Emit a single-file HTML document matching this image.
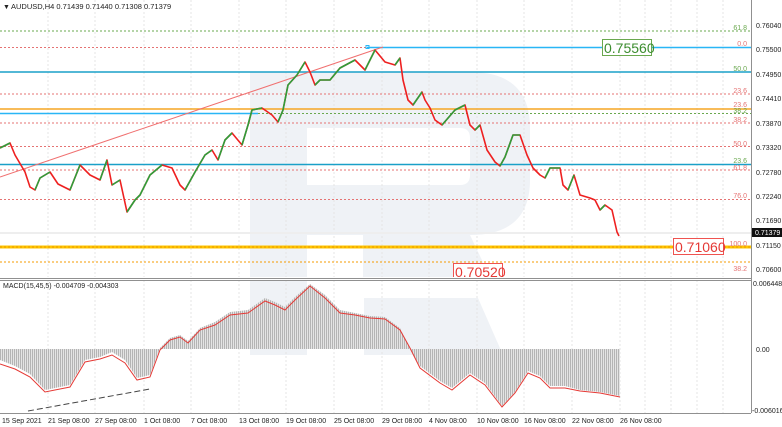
<!DOCTYPE html>
<html><head><meta charset="utf-8"><style>
html,body{margin:0;padding:0;background:#fff;}
svg{display:block;font-family:"Liberation Sans",sans-serif;}
</style></head><body>
<svg width="782" height="427" viewBox="0 0 782 427" xmlns="http://www.w3.org/2000/svg">
<defs>
<pattern id="hp" width="2" height="4" patternUnits="userSpaceOnUse"><rect width="1" height="4" fill="#b4b4b4"/><rect x="1" width="1" height="4" fill="#e4e4e4"/></pattern>
</defs>
<rect width="782" height="427" fill="#fff"/>
<path d="M250 72 H470 Q530 72 530 128 V180 Q530 235 470 235 H307 V277 H250 Z M307 128 V185 H460 Q470 185 470 175 V138 Q470 128 460 128 Z" fill="#eff2f6" fill-rule="evenodd"/>
<path d="M363 235 H470 L490 277 H363 Z" fill="#eff2f6"/>
<rect x="250" y="281" width="57" height="74" fill="#eff2f6"/>
<path d="M364 298 H478 L503 355 H364 Z" fill="#eff2f6"/>
<g stroke="#e4e4e4" stroke-dasharray="2,2" stroke-width="1">
<path d="M48 0V413M95 0V413M144 0V413M191 0V413M239 0V413M286 0V413M334 0V413M382 0V413M429 0V413M477 0V413M524 0V413M572 0V413M620 0V413M645 0V413M671 0V413M697 0V413M723 0V413"/>
</g>
<g stroke-width="1" fill="none">
<path d="M0 31H751" stroke="#6aa84f" stroke-dasharray="2,2"/>
<path d="M0 47.5H751" stroke="#e57373" stroke-dasharray="2,2"/>
<path d="M367 47.5H751" stroke="#29b6f6" stroke-width="1.5"/>
<rect x="366" y="45.5" width="3" height="3" stroke="#29b6f6"/>
<path d="M0 72H751" stroke="#1aa0c8" stroke-width="1.6"/>
<path d="M0 94H751" stroke="#e57373" stroke-dasharray="2,2"/>
<path d="M0 109H751" stroke="#f5a623" stroke-width="1.6"/>
<path d="M0 113.5H258" stroke="#29b6f6" stroke-width="1.6"/>
<path d="M258 113.5H751" stroke="#6aa84f" stroke-dasharray="2,2"/>
<path d="M0 123H751" stroke="#e57373" stroke-dasharray="2,2"/>
<path d="M0 146.5H751" stroke="#e57373" stroke-dasharray="2,2"/>
<path d="M0 164.5H751" stroke="#1aa0c8" stroke-width="1.6"/>
<path d="M0 170H751" stroke="#e57373" stroke-dasharray="2,2"/>
<path d="M0 199.5H751" stroke="#e57373" stroke-dasharray="2,2"/>
<path d="M0 233H751" stroke="#eeeeee" stroke-width="2"/>
<path d="M0 247H751" stroke="#ffc400" stroke-width="3"/>
<path d="M0 247H751" stroke="#e08a00" stroke-width="0.8" stroke-dasharray="2,2"/>
<path d="M0 262H751" stroke="#f59b00" stroke-dasharray="2,2"/>
<path d="M0 177L383 47" stroke="#f07070"/>
</g>
<g fill="none" stroke-width="1.6" stroke-linejoin="round">
<polyline stroke="#ee2020" points="0,148 10,143 15,155 25,172 30,187 35,190 40,178 50,172 58,184 70,190 80,165 90,175 100,180 107,160 112,185 120,180 127,212 135,200 140,195 150,175 162,165 172,168 180,185 185,190 195,172 205,155 212,150 218,160 225,140 232,133 242,145 248,125 252,110 262,108 272,115 278,122 283,110 288,85 297,75 305,62 310,72 315,85 320,80 330,80 340,68 355,60 365,70 375,50 385,62 395,65 400,58 403,80 408,100 413,105 422,92 425,100 430,108 435,120 442,125 455,110 465,105 470,125 475,130 480,125 487,150 495,162 500,166 505,157 513,135 520,135 527,155 533,168 540,175 545,178 550,168 560,168 563,185 568,190 574,175 580,195 590,198 595,200 600,210 605,205 612,210 617,232 619,236"/>
<path stroke="#2e9e3a" d="M0,148L10,143 M35,190L40,178L50,172 M70,190L80,165 M100,180L107,160 M112,185L120,180 M127,212L135,200L140,195L150,175L162,165 M185,190L195,172L205,155L212,150 M218,160L225,140L232,133 M242,145L248,125L252,110L262,108 M278,122L283,110L288,85L297,75L305,62 M315,85L320,80L330,80L340,68L355,60 M365,70L375,50 M395,65L400,58 M413,105L422,92 M442,125L455,110L465,105 M475,130L480,125 M500,166L505,157L513,135L520,135 M545,178L550,168L560,168 M568,190L574,175 M600,210L605,205"/>
</g>
<g font-size="7" text-anchor="end">
<text x="747" y="30" fill="#6aa84f">61.8</text>
<text x="747" y="46" fill="#e57373">0.0</text>
<text x="747" y="71" fill="#6aa84f">50.0</text>
<text x="747" y="93" fill="#e57373">23.6</text>
<text x="747" y="107" fill="#e57373">23.6</text>
<text x="747" y="113" fill="#6aa84f">38.2</text>
<text x="747" y="122" fill="#e57373">38.2</text>
<text x="747" y="146" fill="#e57373">50.0</text>
<text x="747" y="163" fill="#6aa84f">23.6</text>
<text x="747" y="170" fill="#e57373">61.8</text>
<text x="747" y="198" fill="#e57373">76.0</text>
<text x="747" y="246" fill="#e57373">100.0</text>
<text x="747" y="271" fill="#e57373">38.2</text>
</g>
<rect x="602.5" y="39.5" width="49" height="16" fill="#fff" stroke="#6aa84f"/>
<text x="604" y="53" font-size="14" fill="#3c8d2f">0.75560</text>
<rect x="673.5" y="238.5" width="50" height="16" fill="#fff" stroke="#ef5350"/>
<text x="675" y="252" font-size="14" fill="#e53935">0.71060</text>
<rect x="453.5" y="263.5" width="49" height="16" fill="#fff" stroke="#ef5350"/>
<text x="455" y="277" font-size="14" fill="#e53935">0.70520</text>
<text x="3" y="9" font-size="7" fill="#222">▼</text>
<text x="11" y="9" font-size="7.5" fill="#222">AUDUSD,H4  0.71439 0.71440 0.71308 0.71379</text>
<rect x="0" y="277" width="782" height="4" fill="#fff"/>
<path d="M0 278.5H751M0 280.5H751" stroke="#909090" stroke-width="1"/>
<polygon fill="url(#hp)" points="0,349 0,360 15,366 30,374 45,390 60,387 70,385 85,360 100,357 112,352 125,360 137,378 150,375 160,348 170,338 180,335 188,341 200,328 215,322 230,312 248,310 265,298 275,302 285,307 295,297 310,284 325,295 340,310 355,313 370,316 385,317 400,328 410,349 620,349 620,396 600,392 580,390 565,386 550,386 540,376 528,371 515,392 502,406 485,383 470,373 452,388 440,381 420,366 410,349"/>
<polyline fill="none" stroke="#e53935" stroke-width="1" points="0,364 15,369 30,377 45,392 60,389 70,387 85,362 100,359 112,355 125,363 137,380 150,377 160,350 170,340 180,337 188,343 200,330 215,325 230,315 248,313 265,301 275,305 285,310 295,300 310,286 325,298 340,313 355,315 370,318 385,319 400,330 410,348 420,368 440,383 452,390 470,375 485,385 502,407 515,393 528,373 540,378 550,388 565,388 580,391 600,393 620,397"/>
<path d="M28 411L150 389" stroke="#444" stroke-width="1" stroke-dasharray="6,3"/>
<text x="3" y="288" font-size="7" fill="#222">MACD(15,45,5) -0.004709 -0.004303</text>
<path d="M0 413.5H751" stroke="#909090"/>
<g font-size="7" fill="#222">
<text x="2" y="423">15 Sep 2021</text>
<text x="48" y="423">21 Sep 08:00</text>
<text x="95" y="423">27 Sep 08:00</text>
<text x="144" y="423">1 Oct 08:00</text>
<text x="191" y="423">7 Oct 08:00</text>
<text x="239" y="423">13 Oct 08:00</text>
<text x="286" y="423">19 Oct 08:00</text>
<text x="334" y="423">25 Oct 08:00</text>
<text x="382" y="423">29 Oct 08:00</text>
<text x="429" y="423">4 Nov 08:00</text>
<text x="477" y="423">10 Nov 08:00</text>
<text x="524" y="423">16 Nov 08:00</text>
<text x="572" y="423">22 Nov 08:00</text>
<text x="620" y="423">26 Nov 08:00</text>
</g>
<path d="M751.5 0V413" stroke="#909090"/>
<g font-size="7" fill="#222">
<text x="756" y="28">0.76040</text>
<text x="756" y="52">0.75500</text>
<text x="756" y="77">0.74950</text>
<text x="756" y="101">0.74410</text>
<text x="756" y="126">0.73870</text>
<text x="756" y="150">0.73320</text>
<text x="756" y="175">0.72780</text>
<text x="756" y="199">0.72240</text>
<text x="756" y="223">0.71690</text>
<text x="756" y="248">0.71150</text>
<text x="756" y="272">0.70600</text>
<text x="753" y="286">0.006448</text>
<text x="756" y="352">0.00</text>
<text x="752" y="413">-0.006016</text>
</g>
<rect x="752" y="228" width="30" height="9" fill="#111"/>
<text x="755" y="235" font-size="7" fill="#fff">0.71379</text>
</svg>
</body></html>
